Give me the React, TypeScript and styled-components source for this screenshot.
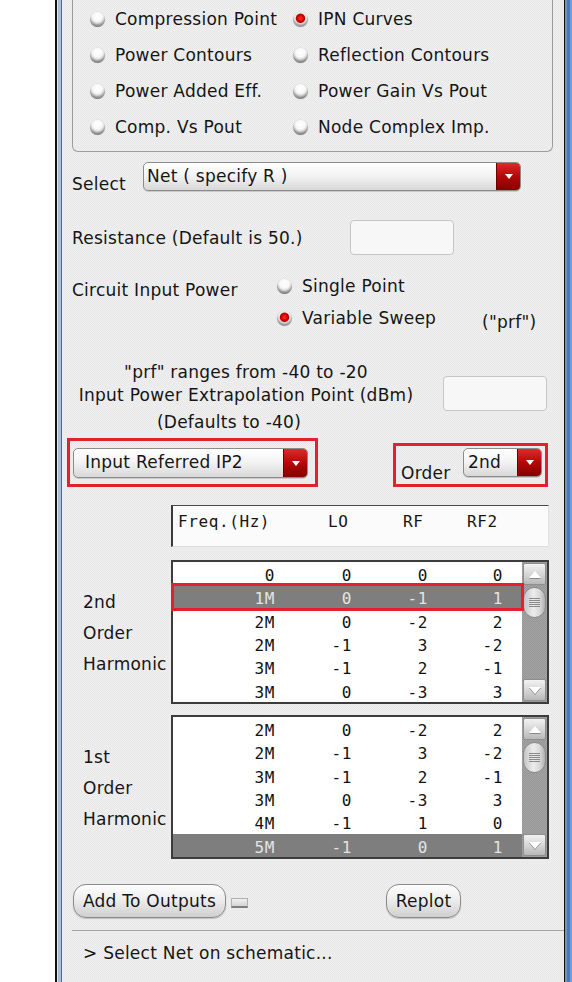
import React from "react";
import styled, { createGlobalStyle, css } from "styled-components";

const GlobalStyle = createGlobalStyle`
  html, body { margin: 0; padding: 0; background: #ffffff; }
  body {
    font-family: "DejaVu Sans", "Liberation Sans", sans-serif;
    font-size: 17px;
    letter-spacing: 0.25px;
    color: #151515;
  }
  * { box-sizing: border-box; }
`;

const Page = styled.div`
  display: flex;
  width: 572px;
  height: 982px;
  overflow: hidden;
  background: #ffffff;
`;

const OuterMargin = styled.div`
  flex: none;
  width: 55px;
  background: #ffffff;
`;

const Frame = styled.div`
  flex: none;
  width: 517px;
  display: flex;
  border-left: 2px solid #111111;
`;

const FrameEdgeLeft = styled.div`
  flex: none;
  width: 5px;
  background: linear-gradient(90deg, #dfe7f2 0 1px, #a9bedb 1px 4px, #5d6b80 4px);
`;

const FrameEdgeRight = styled.div`
  flex: none;
  width: 8px;
  border-left: 1px solid #111111;
  background: linear-gradient(90deg, #6f93cc 0 2px, #4d78bf 2px 5px, #7a9cd2 5px);
`;

const Panel = styled.div`
  flex: none;
  width: 502px;
  padding-left: 10px;
  background: #ececec repeating-conic-gradient(#efefef 0 25%, #e8e8e8 0 50%) 0 0 / 2px 2px;
  display: flex;
  flex-direction: column;
`;

const GroupBox = styled.div`
  margin-right: 11px;
  border: 1px solid #9c9c9c;
  border-top: none;
  border-radius: 0 0 6px 6px;
  padding: 1px 0 6px 17px;
  display: grid;
  grid-template-columns: 203px 1fr;
  grid-auto-rows: 36px;
`;

const RadioItem = styled.label`
  display: flex;
  align-items: center;
  gap: 10px;
  white-space: nowrap;
  line-height: 20px;
`;

const RadioDot = styled.span<{ $on?: boolean }>`
  flex: none;
  width: 15px;
  height: 15px;
  margin-top: 1px;
  border-radius: 50%;
  background: radial-gradient(circle at 50% 30%, #ffffff 0%, #f8f8f8 35%, #d8d8d8 62%, #a0a0a0 85%, #8a8a8a 100%);
  box-shadow: inset 0 -3px 2px rgba(0, 0, 0, 0.28), 0 0 0 0.5px rgba(0, 0, 0, 0.08);
  ${(p) =>
    p.$on &&
    css`
      background: radial-gradient(circle at 50% 42%, #ff3030 0%, #dc0000 26%, #b00000 36%, #f2f2f2 46%, #d4d4d4 68%, #9a9a9a 100%);
    `}
`;

const Radio = ({ label, on }: { label: string; on?: boolean }) => (
  <RadioItem>
    <RadioDot $on={on} />
    <span>{label}</span>
  </RadioItem>
);

const SelectRow = styled.div`
  display: flex;
  margin-top: 10px;
`;

const RowLabel = styled.span<{ $w: number; $pt?: number }>`
  flex: none;
  width: ${(p) => p.$w}px;
  padding-top: ${(p) => p.$pt ?? 0}px;
  line-height: 20px;
  white-space: nowrap;
`;

const Combo = styled.div<{ $w: number; $h: number }>`
  flex: none;
  display: flex;
  width: ${(p) => p.$w}px;
  height: ${(p) => p.$h}px;
  border: 1px solid #8c8c8c;
  border-radius: 5px;
  overflow: hidden;
  background: linear-gradient(#ffffff, #f4f4f4 45%, #d8d8d8);
  box-shadow: 0 1px 0 rgba(0, 0, 0, 0.14);
`;

const ComboText = styled.span<{ $pl: number }>`
  flex: 1;
  display: flex;
  align-items: center;
  padding: 0 0 2px ${(p) => p.$pl}px;
  white-space: nowrap;
`;

const ComboArrow = styled.span`
  flex: none;
  width: 24px;
  display: flex;
  align-items: center;
  justify-content: center;
  border-left: 1px solid #6e0000;
  background: linear-gradient(#de2a2a, #b40808 50%, #860000);
  &::after {
    content: "";
    border-left: 4px solid transparent;
    border-right: 4px solid transparent;
    border-top: 5px solid #ffffff;
  }
`;

const ComboBox = ({ text, w, h, pl = 3 }: { text: string; w: number; h: number; pl?: number }) => (
  <Combo $w={w} $h={h}>
    <ComboText $pl={pl}>{text}</ComboText>
    <ComboArrow />
  </Combo>
);

const FieldRow = styled.div<{ $mt: number }>`
  display: flex;
  align-items: center;
  margin-top: ${(p) => p.$mt}px;
`;

const TextField = styled.div`
  flex: none;
  width: 104px;
  height: 35px;
  background: #f7f7f7;
  border: 1px solid #c6c6c6;
  border-radius: 4px;
`;

const PowerGrid = styled.div`
  display: grid;
  grid-template-columns: 205px 205px auto;
  grid-template-rows: 32px 32px;
  margin-top: 15px;
`;

const PrfNote = styled.span`
  grid-column: 3;
  grid-row: 2;
  padding-top: 10px;
  line-height: 20px;
`;

const ExtrapRow = styled.div`
  display: flex;
  align-items: flex-start;
  margin-top: 26px;
`;

const ExtrapText = styled.div`
  flex: none;
  width: 348px;
  display: flex;
  flex-direction: column;
  text-align: center;
`;

const ExtrapLine = styled.span<{ $h: number; $shift?: number }>`
  height: ${(p) => p.$h}px;
  line-height: ${(p) => p.$h}px;
  padding-right: ${(p) => p.$shift ?? 0}px;
  white-space: nowrap;
`;

const ExtrapField = styled(TextField)`
  margin: 16px 0 0 23px;
`;

const AnnotRow = styled.div`
  display: flex;
  justify-content: space-between;
  align-items: flex-end;
  margin: 0 16px 0 -5px;
`;

const RedBox = styled.div<{ $w: number; $h: number }>`
  display: flex;
  width: ${(p) => p.$w}px;
  height: ${(p) => p.$h}px;
  border: 3px solid #e4202a;
`;

const TypeBox = styled(RedBox)`
  padding: 7px 0 0 3px;
  align-items: flex-start;
`;

const OrderBox = styled(RedBox)`
  padding: 2px 3px 0 5px;
  justify-content: space-between;
  align-items: flex-start;
`;

const OrderLabel = styled.span`
  align-self: flex-end;
  line-height: 20px;
  margin-bottom: 1px;
`;

const Harmonics = styled.div<{ $mt: number }>`
  display: grid;
  grid-template-columns: 99px 378px;
  margin-top: ${(p) => p.$mt}px;
`;

const mono = css`
  font-family: "DejaVu Sans Mono", "Liberation Mono", monospace;
  font-size: 16px;
  letter-spacing: 0.6px;
`;

const HeaderBox = styled.div`
  grid-column: 2;
  ${mono};
  height: 42px;
  background: #fbfbfb;
  border-left: 2px solid #3a3a3a;
  border-top: 1px solid #4a4a4a;
  border-right: 1px solid #e2e2e2;
  border-bottom: 1px solid #dcdcdc;
  padding: 7px 0 0 5px;
  display: grid;
  grid-template-columns: 150px 75px 64px auto;
  line-height: 18px;
`;

const SideLabel = styled.div`
  display: flex;
  flex-direction: column;
  justify-content: center;
  padding-left: 11px;
  padding-top: 2px;
  line-height: 31px;
`;

const Table = styled.div`
  display: flex;
  height: 144px;
  border: 2px solid #3c3c3c;
  background: #ffffff;
`;

const TableBody = styled.div`
  flex: 1;
  display: flex;
  flex-direction: column;
  ${mono};
`;

const DataRow = styled.div<{ $sel?: boolean; $mark?: boolean }>`
  flex: none;
  height: 23.33px;
  display: grid;
  grid-template-columns: 102px 77px 76px 75px;
  align-items: center;
  padding-top: 5px;
  line-height: 18px;
  color: #111111;
  & > span { text-align: right; }
  ${(p) =>
    p.$sel &&
    css`
      background: #7e7e7e;
      color: #e4e4e4;
    `}
  ${(p) =>
    p.$mark &&
    css`
      outline: 3px solid #e4202a;
      outline-offset: -1px;
      position: relative;
      z-index: 1;
    `}
`;

const ScrollBar = styled.div`
  flex: none;
  width: 25px;
  display: flex;
  flex-direction: column;
  padding: 1px 0 1px 0;
  background: #9d9d9d repeating-conic-gradient(#a4a4a4 0 25%, #969696 0 50%) 0 0 / 2px 2px;
`;

const ScrollBtn = styled.div<{ $down?: boolean }>`
  flex: none;
  height: 22px;
  margin: 0 1px;
  border: 1px solid #8e8e8e;
  border-radius: 2px;
  background: linear-gradient(#f2f2f2, #d4d4d4 55%, #b8b8b8);
  display: flex;
  align-items: center;
  justify-content: center;
  &::after {
    content: "";
    border-left: 6px solid transparent;
    border-right: 6px solid transparent;
    ${(p) =>
      p.$down
        ? css`border-top: 7px solid #ffffff;`
        : css`border-bottom: 7px solid #ffffff;`}
    filter: drop-shadow(0 1px 0 #8a8a8a);
  }
`;

const ScrollThumb = styled.div`
  flex: none;
  height: 31px;
  margin: 2px 1px 0;
  border: 1px solid #8a8a8a;
  border-radius: 12px;
  background: linear-gradient(90deg, #c4c4c4, #ececec 45%, #d8d8d8 75%, #b0b0b0);
  display: flex;
  align-items: center;
  justify-content: center;
  &::after {
    content: "";
    width: 11px;
    height: 9px;
    background: repeating-linear-gradient(#8a8a8a 0 1px, transparent 1px 2px);
  }
`;

const ScrollSpace = styled.div`
  flex: 1;
`;

const ButtonRow = styled.div`
  display: flex;
  align-items: center;
  margin-top: 25px;
`;

const PillButton = styled.button<{ $w: number; $ml: number }>`
  flex: none;
  width: ${(p) => p.$w}px;
  height: 34px;
  margin-left: ${(p) => p.$ml}px;
  padding: 0 0 1px;
  font: inherit;
  letter-spacing: inherit;
  color: #151515;
  border: 1px solid #8a8a8a;
  border-radius: 13px;
  background: linear-gradient(#fdfdfd, #eeeeee 45%, #cfcfcf);
  box-shadow: 0 1px 1px rgba(0, 0, 0, 0.18);
`;

const Toggle = styled.span`
  flex: none;
  width: 17px;
  height: 10px;
  margin-left: 5px;
  margin-top: 4px;
  background: linear-gradient(#f0f0f0, #d4d4d4);
  border: 1px solid #b0b0b0;
  border-bottom: 2px solid #7e7e7e;
`;

const Separator = styled.div`
  height: 1px;
  margin-top: 12px;
  background: #a6a6a6;
`;

const Status = styled.div`
  margin-top: 12px;
  padding-left: 11px;
  line-height: 20px;
`;

type Row = [string, string, string, string];

const table1: Row[] = [
  ["0", "0", "0", "0"],
  ["1M", "0", "-1", "1"],
  ["2M", "0", "-2", "2"],
  ["2M", "-1", "3", "-2"],
  ["3M", "-1", "2", "-1"],
  ["3M", "0", "-3", "3"],
];

const table2: Row[] = [
  ["2M", "0", "-2", "2"],
  ["2M", "-1", "3", "-2"],
  ["3M", "-1", "2", "-1"],
  ["3M", "0", "-3", "3"],
  ["4M", "-1", "1", "0"],
  ["5M", "-1", "0", "1"],
];

const HarmonicTable = ({
  rows,
  selected,
  marked,
}: {
  rows: Row[];
  selected: number;
  marked?: boolean;
}) => (
  <Table>
    <TableBody>
      {rows.map((r, i) => (
        <DataRow key={i} $sel={i === selected} $mark={marked && i === selected}>
          {r.map((c, j) => (
            <span key={j}>{c}</span>
          ))}
        </DataRow>
      ))}
    </TableBody>
    <ScrollBar>
      <ScrollBtn />
      <ScrollThumb />
      <ScrollSpace />
      <ScrollBtn $down />
    </ScrollBar>
  </Table>
);

const Harm = ({ order }: { order: string }) => (
  <SideLabel>
    <span>{order}</span>
    <span>Order</span>
    <span>Harmonic</span>
  </SideLabel>
);

export default function App() {
  return (
    <Page>
      <GlobalStyle />
      <OuterMargin />
      <Frame>
        <FrameEdgeLeft />
        <Panel>
          <GroupBox>
            <Radio label="Compression Point" />
            <Radio label="IPN Curves" on />
            <Radio label="Power Contours" />
            <Radio label="Reflection Contours" />
            <Radio label="Power Added Eff." />
            <Radio label="Power Gain Vs Pout" />
            <Radio label="Comp. Vs Pout" />
            <Radio label="Node Complex Imp." />
          </GroupBox>

          <SelectRow>
            <RowLabel $w={71} $pt={12}>Select</RowLabel>
            <ComboBox text="Net ( specify R )" w={378} h={29} pl={3} />
          </SelectRow>

          <FieldRow $mt={26}>
            <RowLabel $w={278}>Resistance (Default is 50.)</RowLabel>
            <TextField />
          </FieldRow>

          <PowerGrid>
            <RowLabel $w={205} $pt={10}>Circuit Input Power</RowLabel>
            <Radio label="Single Point" />
            <span />
            <span />
            <Radio label="Variable Sweep" on />
            <PrfNote>("prf")</PrfNote>
          </PowerGrid>

          <ExtrapRow>
            <ExtrapText>
              <ExtrapLine $h={24}>"prf" ranges from -40 to -20</ExtrapLine>
              <ExtrapLine $h={22}>Input Power Extrapolation Point (dBm)</ExtrapLine>
              <ExtrapLine $h={32} $shift={34}>(Defaults to -40)</ExtrapLine>
            </ExtrapText>
            <ExtrapField />
          </ExtrapRow>

          <AnnotRow>
            <TypeBox $w={251} $h={49}>
              <ComboBox text="Input Referred IP2" w={235} h={30} pl={11} />
            </TypeBox>
            <OrderBox $w={155} $h={44}>
              <OrderLabel>Order</OrderLabel>
              <ComboBox text="2nd" w={79} h={29} pl={4} />
            </OrderBox>
          </AnnotRow>

          <Harmonics $mt={18}>
            <HeaderBox>
              <span>Freq.(Hz)</span>
              <span>LO</span>
              <span>RF</span>
              <span>RF2</span>
            </HeaderBox>
          </Harmonics>

          <Harmonics $mt={13}>
            <Harm order="2nd" />
            <HarmonicTable rows={table1} selected={1} marked />
          </Harmonics>

          <Harmonics $mt={11}>
            <Harm order="1st" />
            <HarmonicTable rows={table2} selected={5} />
          </Harmonics>

          <ButtonRow>
            <PillButton $w={153} $ml={1}>Add To Outputs</PillButton>
            <Toggle />
            <PillButton $w={75} $ml={138}>Replot</PillButton>
          </ButtonRow>

          <Separator />
          <Status>&gt; Select Net on schematic...</Status>
        </Panel>
        <FrameEdgeRight />
      </Frame>
    </Page>
  );
}
